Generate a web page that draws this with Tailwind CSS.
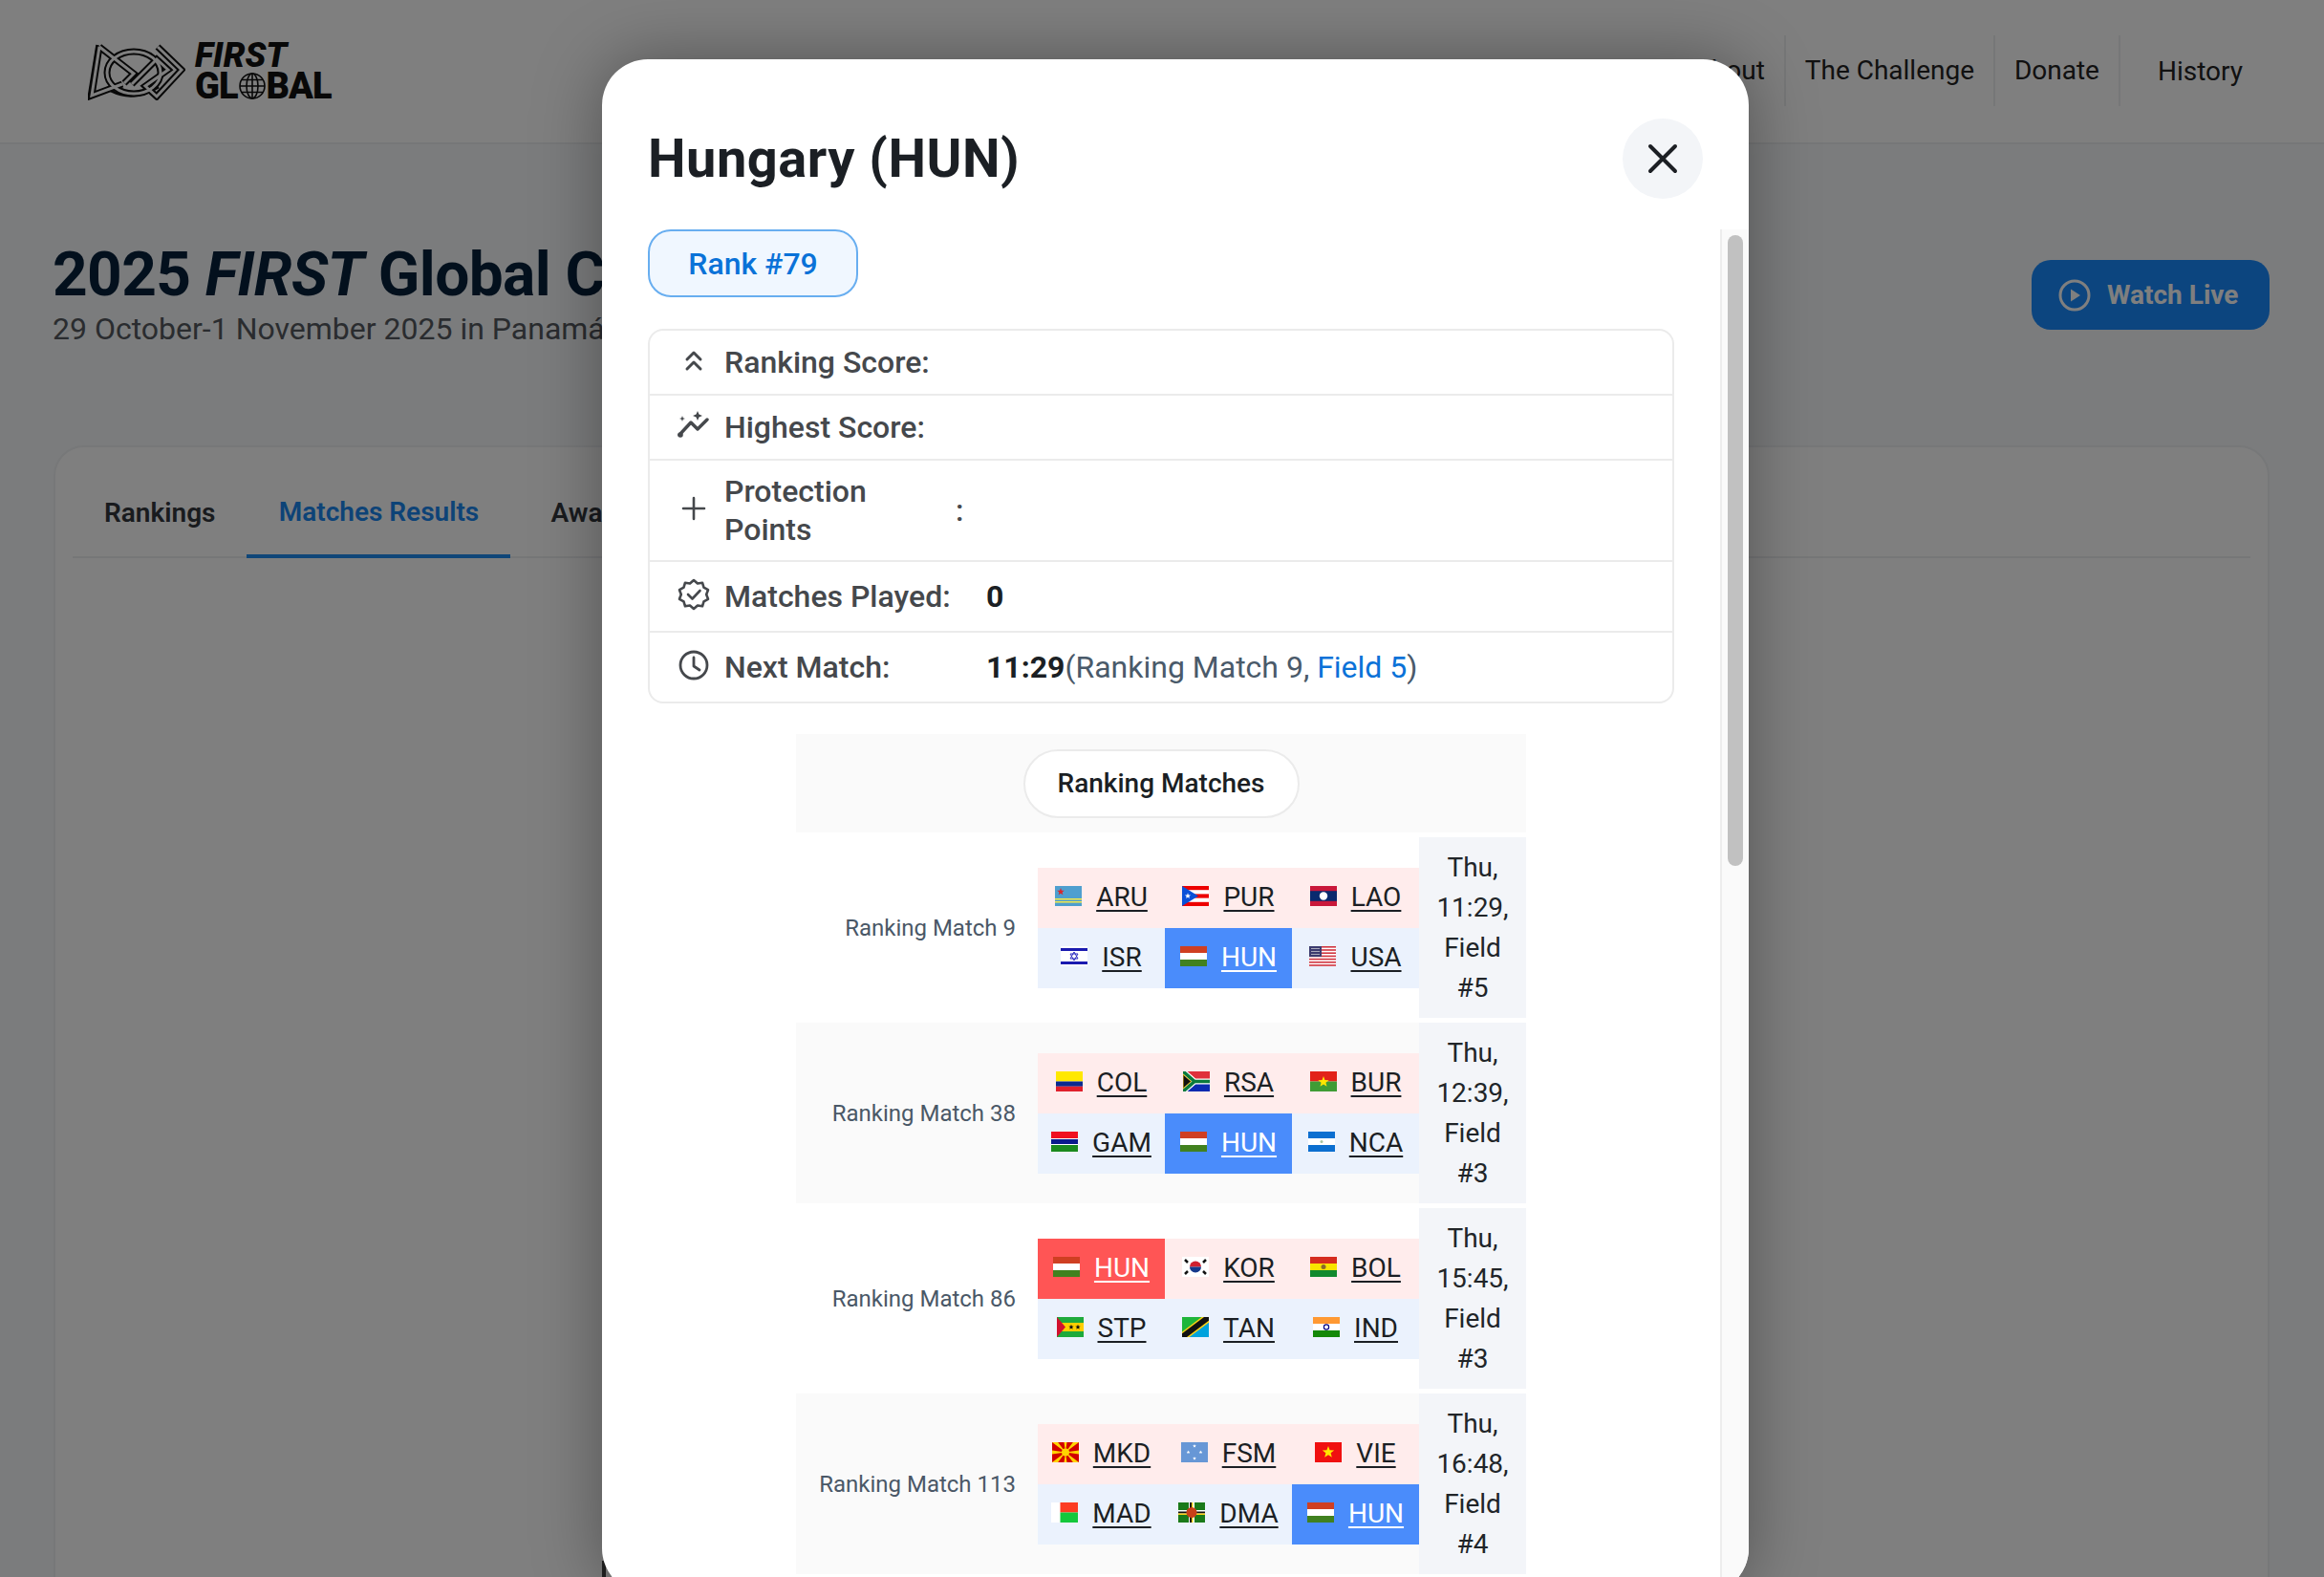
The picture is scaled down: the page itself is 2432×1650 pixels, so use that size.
<!DOCTYPE html>
<html lang="en">
  <head>
    <meta charset="utf-8">
    <title>2025 FIRST Global Challenge</title>
    <script src="https://cdn.jsdelivr.net/npm/@tailwindcss/browser@4"></script>
  </head>
  <body class="relative h-[1650px] overflow-hidden bg-[#f6f8fa] font-['Roboto',sans-serif]">
    <!-- Page header -->
    <header class="flex h-[151px] items-center justify-between border-b-2 border-[#eceef0] bg-white pl-[92px] pr-[85px]">
      <div class="flex items-center gap-[10px]">
        <svg class="h-[60px] w-[102px]" viewBox="0 0 102 60" fill="none" stroke-linejoin="miter">
          <g stroke="#111" stroke-width="7">
            <ellipse cx="48" cy="31" rx="28" ry="22"/>
            <path d="M12 4 4 55l32-12M12 4l36 28-10 10M73 4l25 24-26 28-12-11 24-17-12-11-26 26"/>
          </g>
          <path d="M10 2 1 58" stroke="#111" stroke-width="3.500"/>
          <path d="M24 50q24 12 50-4" stroke="#111" stroke-width="3"/>
          <g stroke="#fff" stroke-width="3">
            <ellipse cx="48" cy="31" rx="28" ry="22"/>
            <path d="M12 4 4 55l32-12M12 4l36 28-10 10M73 4l25 24-26 28-12-11 24-17-12-11-26 26"/>
          </g>
        </svg>
        <div class="flex flex-col text-[#111]">
          <span class="text-[36px] font-black italic leading-[26px]">FIRST</span>
          <span class="mt-[5px] flex items-center text-[38px] font-black leading-[28px] tracking-[-1px]">
            GL
            <svg class="mx-[1px] h-[28px] w-[28px]" viewBox="0 0 28 28" fill="none" stroke="#111" stroke-width="1.600">
              <circle cx="14" cy="14" r="13"/><ellipse cx="14" cy="14" rx="6" ry="13"/>
              <path d="M14 1v26M1 14h26M3 7.500h22M3 20.500h22"/>
            </svg>
            BAL
          </span>
        </div>
      </div>
      <nav class="mb-[2px] flex items-center text-[28px] text-[#222]">
        <a class="flex h-[74px] items-center border-r-2 border-[#eceef0] pl-[21px] pr-[20px]">About</a>
        <a class="flex h-[74px] w-[219px] items-center justify-center border-r-2 border-[#eceef0]">The Challenge</a>
        <a class="flex h-[74px] w-[131px] items-center justify-center border-r-2 border-[#eceef0]">Donate</a>
        <a class="flex h-[74px] items-center pl-[39px] pt-[2px]">History</a>
      </nav>
    </header>

    <main class="pl-[56px] pr-[57px]">
      <div class="flex items-start justify-between pt-[105px]">
        <div>
          <h1 class="-ml-[1px] text-[64px] font-bold leading-[64px] tracking-[-0.6px] text-[#07203a]">2025 <i>FIRST</i> Global Challenge</h1>
          <p class="-ml-[1px] mt-[4px] text-[32px] leading-[40px] text-[#54585f]">29 October-1 November 2025 in Panamá City</p>
        </div>
        <a class="mt-[16px] flex h-[73px] w-[249px] items-center gap-[17px] rounded-[20px] bg-[#188bff] pl-[28px] text-[28px] font-bold text-white">
          <svg class="h-[34px] w-[34px]" viewBox="0 0 34 34" fill="none">
            <circle cx="17" cy="17" r="15" stroke="currentColor" stroke-width="3"/>
            <path d="M13 10.500 23 17l-10 6.500z" fill="currentColor"/>
          </svg>
          Watch Live
        </a>
      </div>

      <section class="mt-[102px] h-[1300px] rounded-[32px] border-2 border-[#eef0f2] bg-white px-[18px]">
        <div class="flex h-[116px] items-end border-b-2 border-[#eceef0] text-[28px] font-semibold text-[#32373d]">
          <a class="flex h-[118px] -mb-[2px] items-center px-[33px] pt-[23px]">Rankings</a>
          <a class="flex h-[118px] w-[276px] -mb-[2px] items-center justify-center border-b-4 border-[#1e8cf0] pt-[25px] text-[#1a86ee]">Matches Results</a>
          <a class="ml-[9px] flex h-[118px] -mb-[2px] items-center px-[33px] pt-[23px]">Awards</a>
        </div>
      </section>
    </main>

    <!-- Modal -->
    <div class="absolute inset-0 bg-black/50">
      <div class="absolute left-[630px] top-[1633px] h-[17px] w-[4px] bg-[#222]"></div>
      <div class="relative ml-[630px] mt-[62px] flex h-[1606px] w-[1200px] flex-col overflow-hidden rounded-[48px] bg-white shadow-[0_0_70px_rgba(0,0,0,0.35)]">
        <div class="flex h-[178px] shrink-0 items-start justify-between px-[48px] pt-[62px]">
          <h2 class="text-[56px] font-bold leading-[84px] tracking-[0.5px] text-[#1b1f24]">Hungary (HUN)</h2>
          <button class="flex h-[84px] w-[84px] items-center justify-center rounded-full bg-[#f3f5f8]">
            <svg class="h-[32px] w-[32px]" viewBox="0 0 32 32" fill="none" stroke="#1c1f24" stroke-width="4" stroke-linecap="round">
              <path d="M3 3l26 26M29 3 3 29"/>
            </svg>
          </button>
        </div>

        <div class="flex min-h-0 flex-1">
          <div class="w-[1170px] shrink-0 px-[48px]">
            <div class="flex h-[71px] w-[220px] items-center justify-center rounded-[24px] border-2 border-[#68aef0] bg-[#f0f7ff] pt-[1px] text-[32px] font-medium text-[#0a72d8]">Rank #79</div>

            <!-- Team stats -->
            <div class="mt-[33px] overflow-hidden rounded-[16px] border-2 border-[#ebebeb] text-[32px] text-[#45484c]">
              <div class="flex h-[68px] items-center border-b-2 border-[#ebebeb]">
                <span class="flex w-[78px] justify-center pl-[13px]">
                  <svg class="h-[32px] w-[32px]" viewBox="0 0 32 32" fill="none" stroke="currentColor" stroke-width="3" stroke-linecap="round" stroke-linejoin="round"><path d="M9 13l7-7 7 7M9 23l7-7 7 7"/></svg>
                </span>
                <span class="font-medium">Ranking Score:</span>
              </div>
              <div class="flex h-[68px] items-center border-b-2 border-[#ebebeb]">
                <span class="flex w-[78px] justify-center pl-[13px]">
                  <svg class="h-[34px] w-[34px]" viewBox="0 0 34 34" fill="currentColor"><path d="M2 25 14 12l7 7 10-10" fill="none" stroke="currentColor" stroke-width="3.400" stroke-linecap="round" stroke-linejoin="round"/><circle cx="3" cy="25" r="2.800"/><path d="M21 0l1.500 3.500 3.500 1.500-3.500 1.500-1.500 3.500-1.500-3.500-3.500-1.500 3.500-1.500zM5 5l.8 2.200 2.200.8-2.200.8-.8 2.200-.8-2.200-2.200-.8 2.200-.8z"/></svg>
                </span>
                <span class="font-medium">Highest Score:</span>
              </div>
              <div class="flex h-[106px] items-center border-b-2 border-[#ebebeb]">
                <span class="flex w-[78px] justify-center pl-[13px]">
                  <svg class="mb-[5px] h-[32px] w-[32px]" viewBox="0 0 32 32" fill="none" stroke="currentColor" stroke-width="2.600" stroke-linecap="round"><path d="M16 5v22M5 16h22"/></svg>
                </span>
                <span class="w-[242px] font-medium leading-[40px]">Protection<br>Points</span>
                <span class="font-medium">:</span>
              </div>
              <div class="flex h-[74px] items-center border-b-2 border-[#ebebeb]">
                <span class="flex w-[78px] justify-center pl-[13px]">
                  <svg class="mb-[4px] h-[34px] w-[34px]" viewBox="0 0 34 34" fill="none" stroke="currentColor" stroke-width="2.600" stroke-linejoin="round" stroke-linecap="round"><path d="M17 2l4 3.500 5-.8 1.500 5 4.500 2.500-1.800 4.800 1.800 4.800-4.500 2.500-1.500 5-5-.8-4 3.500-4-3.500-5 .8-1.500-5-4.500-2.500 1.800-4.800-1.800-4.800 4.500-2.500 1.500-5 5 .8z"/><path d="M11 17l4.500 4.500 8-8.500"/></svg>
                </span>
                <span class="w-[274px] font-medium">Matches Played:</span>
                <span class="font-bold text-[#1b1f24]">0</span>
              </div>
              <div class="flex h-[72px] items-center">
                <span class="flex w-[78px] justify-center pl-[13px]">
                  <svg class="mb-[4px] h-[32px] w-[32px]" viewBox="0 0 32 32" fill="none" stroke="currentColor" stroke-width="2.800" stroke-linecap="round" stroke-linejoin="round"><circle cx="16" cy="16" r="14"/><path d="M16 8v9l6 4"/></svg>
                </span>
                <span class="w-[274px] font-medium">Next Match:</span>
                <span class="text-[#4a5a6a]"><b class="text-[#1b1f24]">11:29</b>(Ranking Match 9, <span class="text-[#0a72d8]">Field 5</span>)</span>
              </div>
            </div>

            <!-- Match list, filled in by the script below -->
            <div class="mx-auto mt-[32px] w-[764px]">
              <div class="flex h-[103px] items-center justify-center bg-[#fafafa]">
                <span class="flex h-[72px] w-[289px] items-center justify-center rounded-full border-2 border-[#ebebeb] bg-white text-[28px] font-medium text-[#1b1f24]">Ranking Matches</span>
              </div>
              <div id="matches"></div>
            </div>
          </div>

          <!-- Scrollbar -->
          <div class="w-[30px] shrink-0 border-l-2 border-[#ededed] bg-[#fafafa] pl-[6px] pt-[6px]">
            <div class="h-[660px] w-[16px] rounded-full bg-[#c1c1c1]"></div>
          </div>
        </div>
      </div>
    </div>

    <script>
      // Simple star for the flags
      const star = (cx, cy, r, fill) => {
        const pts = [];
        for (let i = 0; i < 10; i++) {
          const a = -Math.PI / 2 + i * Math.PI / 5;
          const d = i % 2 ? r * 0.42 : r;
          pts.push((cx + d * Math.cos(a)).toFixed(2) + ',' + (cy + d * Math.sin(a)).toFixed(2));
        }
        return `<polygon points="${pts.join(' ')}" fill="${fill}"/>`;
      };
      const r = (x, y, w, h, fill) => `<rect x="${x}" y="${y}" width="${w}" height="${h}" fill="${fill}"/>`;
      const rays = () => {
        let out = '';
        for (let i = 0; i < 8; i++) {
          const a = i * Math.PI / 4;
          out += `<path d="M14 10.500 ${(14 + 20 * Math.cos(a - 0.14)).toFixed(1)} ${(10.5 + 20 * Math.sin(a - 0.14)).toFixed(1)} ${(14 + 20 * Math.cos(a + 0.14)).toFixed(1)} ${(10.5 + 20 * Math.sin(a + 0.14)).toFixed(1)}z" fill="#ffd400"/>`;
        }
        return out;
      };

      const flags = {
        ARU: r(0, 0, 28, 21, '#4f9fcf') + r(0, 13, 28, 1.5, '#f5e94b') + r(0, 16, 28, 1.5, '#f5e94b') + star(6, 6, 4, '#d8262c'),
        PUR: r(0, 0, 28, 21, '#fff') + r(0, 0, 28, 4.2, '#ed0000') + r(0, 8.4, 28, 4.2, '#ed0000') + r(0, 16.8, 28, 4.2, '#ed0000') + '<path d="M0 0 17 10.500 0 21z" fill="#0a50d8"/>' + star(6, 10.5, 3.2, '#fff'),
        LAO: r(0, 0, 28, 21, '#c9173a') + r(0, 5.2, 28, 10.6, '#0a2a6e') + '<circle cx="14" cy="10.500" r="4.200" fill="#fff"/>',
        ISR: r(0, 0, 28, 21, '#fff') + r(0, 2, 28, 3, '#1a1ab0') + r(0, 16, 28, 3, '#1a1ab0') + '<path d="M14 6 18 13H10zM14 15 10 8h8z" fill="none" stroke="#2a2ac0" stroke-width="1"/>',
        HUN: r(0, 0, 28, 7, '#cf3f22') + r(0, 7, 28, 7, '#fff') + r(0, 14, 28, 7, '#41811f'),
        USA: r(0, 0, 28, 21, '#fff') + [0, 3.2, 6.4, 9.6, 12.8, 16, 19.2].map(y => r(0, y, 28, 1.6, '#d0343f')).join('') + r(0, 0, 13, 11, '#3c3b6e') + r(2, 2, 9, 1, '#aab') + r(2, 5, 9, 1, '#aab') + r(2, 8, 9, 1, '#aab'),
        COL: r(0, 0, 28, 10.5, '#ffe800') + r(0, 10.5, 28, 5.25, '#0a2a90') + r(0, 15.75, 28, 5.25, '#e0202c'),
        RSA: r(0, 0, 28, 10.5, '#e0303c') + r(0, 10.5, 28, 10.5, '#0a2ab0') + '<path d="M0 0 12 10.500 0 21M12 10.500H28" fill="none" stroke="#fff" stroke-width="6"/><path d="M0 0 12 10.500 0 21M12 10.500H28" fill="none" stroke="#0a7a3c" stroke-width="3.600"/><path d="M0 3 8.500 10.500 0 18z" fill="#111" stroke="#f5c518" stroke-width="1"/>',
        BUR: r(0, 0, 28, 10.5, '#e2231a') + r(0, 10.5, 28, 10.5, '#3f9c35') + star(14, 11, 6, '#ffe600'),
        GAM: r(0, 0, 28, 7, '#f0111f') + r(0, 7, 28, 7, '#fff') + r(0, 8, 28, 5, '#0a1a8c') + r(0, 14, 28, 7, '#1a8a1e'),
        NCA: r(0, 0, 28, 7, '#0c6fd0') + r(0, 7, 28, 7, '#fff') + r(0, 14, 28, 7, '#0c6fd0') + '<circle cx="14" cy="10.500" r="1.500" fill="#a7c4a0"/>',
        KOR: r(0, 0, 28, 21, '#fff') + '<path d="M8 10.500a6 6 0 0 1 12 0z" fill="#d02030"/><path d="M8 10.500a6 6 0 0 0 12 0z" fill="#15398c"/><path d="M3 3 6 6M3 18 6 15M25 3 22 6M25 18 22 15" stroke="#111" stroke-width="2.500"/>',
        BOL: r(0, 0, 28, 7, '#d52b1e') + r(0, 7, 28, 7, '#f9e300') + r(0, 14, 28, 7, '#118a2e') + '<circle cx="14" cy="10.500" r="2.500" fill="#8a6a2a"/>',
        STP: r(0, 0, 28, 21, '#1eaa3c') + r(0, 6, 28, 9, '#ffce00') + '<path d="M0 0 9 10.500 0 21z" fill="#d2102e"/>' + star(15, 10.5, 2.8, '#111') + star(22, 10.5, 2.8, '#111'),
        TAN: r(0, 0, 28, 21, '#1eb53a') + '<path d="M28 0V21H0z" fill="#00a3dd"/><path d="M0 21 28 0" stroke="#fcd116" stroke-width="9"/><path d="M0 21 28 0" stroke="#111" stroke-width="6"/>',
        IND: r(0, 0, 28, 7, '#ff9933') + r(0, 7, 28, 7, '#fff') + r(0, 14, 28, 7, '#138808') + '<circle cx="14" cy="10.500" r="2.600" fill="none" stroke="#000080" stroke-width="1.200"/>',
        MKD: r(0, 0, 28, 21, '#d20000') + rays() + '<circle cx="14" cy="10.500" r="4" fill="#ffd400"/>',
        FSM: r(0, 0, 28, 21, '#6797d6') + star(14, 4, 2, '#fff') + star(14, 17, 2, '#fff') + star(7.500, 10.5, 2, '#fff') + star(20.500, 10.5, 2, '#fff'),
        VIE: r(0, 0, 28, 21, '#f01010') + star(14, 10.5, 6.5, '#ffe600'),
        MAD: r(0, 0, 28, 21, '#fff') + r(9.5, 0, 18.5, 10.5, '#fc3d22') + r(9.5, 10.5, 18.5, 10.5, '#14c83c'),
        DMA: r(0, 0, 28, 21, '#1a7a1a') + r(11, 0, 6, 21, '#fff') + r(0, 8, 28, 5, '#fff') + r(12, 0, 2, 21, '#111') + r(0, 9.5, 28, 2, '#111') + r(14, 0, 1.5, 21, '#fcd116') + r(0, 11.5, 28, 1.5, '#fcd116') + '<circle cx="14" cy="10.500" r="5.500" fill="#c8401a"/>'
      };

      const matches = [
        { name: 'Ranking Match 9', time: '11:29', field: 5, red: ['ARU', 'PUR', 'LAO'], blue: ['ISR', 'HUN', 'USA'] },
        { name: 'Ranking Match 38', time: '12:39', field: 3, red: ['COL', 'RSA', 'BUR'], blue: ['GAM', 'HUN', 'NCA'] },
        { name: 'Ranking Match 86', time: '15:45', field: 3, red: ['HUN', 'KOR', 'BOL'], blue: ['STP', 'TAN', 'IND'] },
        { name: 'Ranking Match 113', time: '16:48', field: 4, red: ['MKD', 'FSM', 'VIE'], blue: ['MAD', 'DMA', 'HUN'] }
      ];

      const teamCell = (code, side) => {
        const mine = code === 'HUN';
        const bg = side === 'red'
          ? (mine ? 'bg-[#ff5555] text-white' : 'bg-[#ffecec] text-[#1b1f24]')
          : (mine ? 'bg-[#4a8cfb] text-white' : 'bg-[#ebf2fd] text-[#1b1f24]');
        return `<div class="flex h-[63px] items-center justify-center gap-[15px] ${bg}">
          <svg class="mb-[4px] h-[21px] w-[28px] shrink-0" viewBox="0 0 28 21">${flags[code]}</svg>
          <a class="underline decoration-2 underline-offset-[4px]">${code}</a>
        </div>`;
      };

      document.getElementById('matches').innerHTML = matches.map((m, i) => `
        <div class="mt-[5px] flex h-[189px] items-center ${i % 2 ? 'bg-[#fafafa]' : 'bg-white'}">
          <div class="w-[253px] pr-[23px] text-right text-[24px] text-[#4a5867]">${m.name}</div>
          <div class="grid w-[399px] grid-cols-3 text-[28px]">
            ${m.red.map(c => teamCell(c, 'red')).join('')}
            ${m.blue.map(c => teamCell(c, 'blue')).join('')}
          </div>
          <div class="flex h-full w-[112px] items-center justify-center bg-[#f3f5f9] text-center text-[28px] leading-[42px] text-[#212529]">Thu,<br>${m.time},<br>Field<br>#${m.field}</div>
        </div>`).join('');
    </script>
  </body>
</html>
